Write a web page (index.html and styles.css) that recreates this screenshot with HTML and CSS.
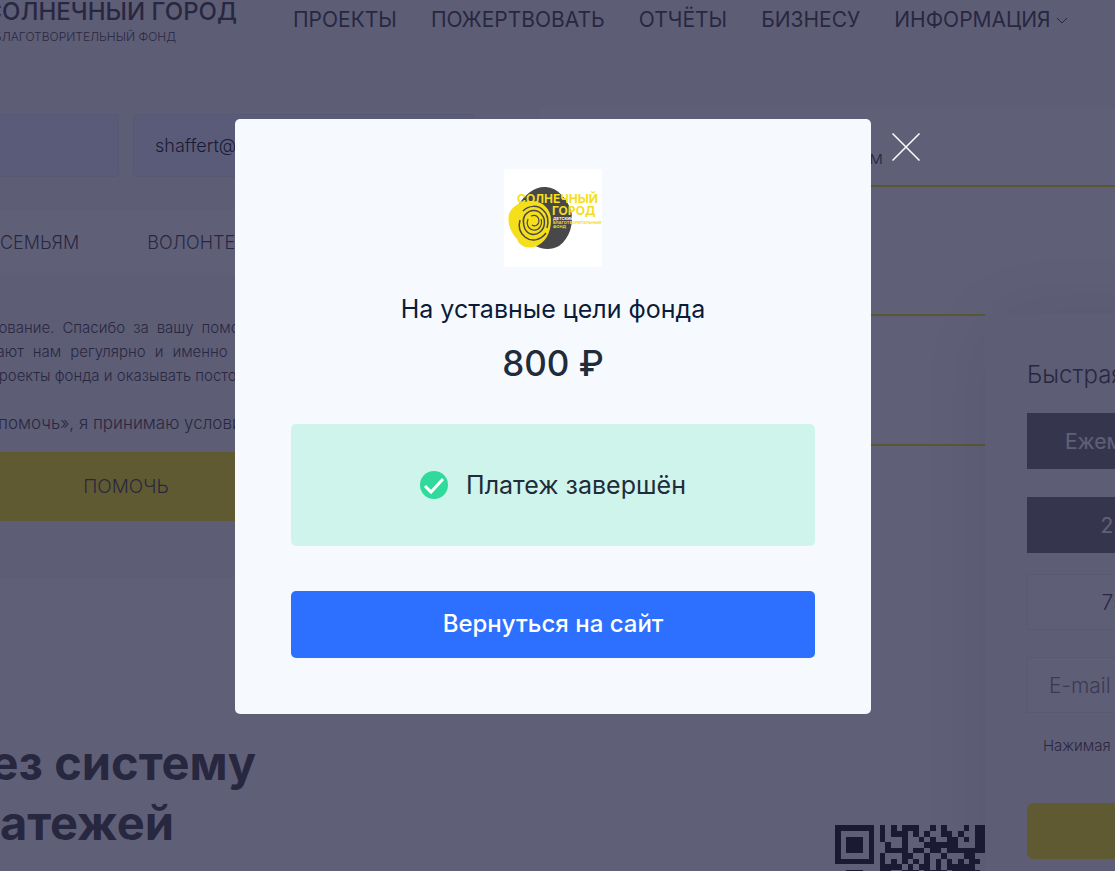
FILE: index.html
```
<!DOCTYPE html>
<html lang="ru">
<head>
<meta charset="utf-8">
<meta name="viewport" content="width=device-width, initial-scale=1">
<title>Солнечный город</title>
<link rel="stylesheet" href="styles.css">
</head>
<body>
<div class="page">
  <header class="header">
    <div class="brand">
      <span class="brand-name">СОЛНЕЧНЫЙ ГОРОД</span>
      <span class="brand-sub">БЛАГОТВОРИТЕЛЬНЫЙ ФОНД</span>
    </div>
    <nav class="nav">
      <a href="#">ПРОЕКТЫ</a>
      <a href="#">ПОЖЕРТВОВАТЬ</a>
      <a href="#">ОТЧЁТЫ</a>
      <a href="#">БИЗНЕСУ</a>
      <a href="#">ИНФОРМАЦИЯ <svg class="chevron" viewBox="0 0 12 8" aria-hidden="true"><path d="M1 1l5 5 5-5"/></svg></a>
    </nav>
  </header>
  <main class="content">
    <div class="donate">
      <div class="fields">
        <input class="field field-name" type="text" aria-label="Имя">
        <input class="field field-mail" type="text" aria-label="E-mail" value="shaffert@mail">
      </div>
      <div class="tabs">
        <a href="#">СЕМЬЯМ</a>
        <a href="#">ВОЛОНТЕРАМ</a>
      </div>
      <div class="terms">
        <p class="note">
          <span class="note-line">вование. Спасибо за вашу помощь</span>
          <span class="note-line">гают нам регулярно и именно эта</span>
          <span class="note-line note-last">проекты фонда и оказывать постоянную</span>
        </p>
        <p class="agree">помочь», я принимаю условия</p>
        <button class="help" type="button">ПОМОЧЬ</button>
      </div>
      <h2 class="headline">
        <span class="headline-first">через систему</span>
        <span class="headline-second">платежей</span>
      </h2>
    </div>
    <div class="ways">
      <ul class="ways-list">
        <li class="way way-first"><span class="way-label">Переводом</span></li>
        <li class="way"></li>
        <li class="way"></li>
      </ul>
      <svg class="qr" viewBox="0 0 27 9" role="img" aria-label="QR-код" shape-rendering="crispEdges">
        <path d="M0 .5h7M0 6.5h7M.5 0v7M6.5 0v7"/>
        <path d="M2 3.500h3M2 2.500h3M2 4.500h3"/>
        <path d="M8 .5h1m1 0h1m1 0h3m2 0h1m1 0h1m3 0h1m1 0h2M8 1.500h1m1 0h3m1 0h1m1 0h1m2 0h2m1 0h1m2 0h2M8 2.500h1m3 0h1m2 0h1m1 0h1m2 0h2m1 0h1m1 0h2M9 3.500h1m2 0h1m3 0h6m3 0h2M9 4.500h4m1 0h2m1 0h2m1 0h7M8 5.500h1m3 0h2m2 0h1m2 0h1m3 0h2M8 6.500h1m1 0h1m1 0h1m1 0h1m1 0h1m1 0h1m1 0h1m1 0h1m1 0h2m1 0h1M8 7.500h4m1 0h1m1 0h2m1 0h1m1 0h5M2 8.500h3m3 0h2m2 0h3m1 0h4m1 0h5"/>
      </svg>
    </div>
  </main>
  <aside class="quick">
    <h3 class="quick-title">Быстрая помощь</h3>
    <button class="pick pick-on pick-period" type="button">Ежемесячно</button>
    <button class="pick pick-on" type="button">250</button>
    <button class="pick" type="button">750</button>
    <input class="quick-mail" type="email" aria-label="E-mail" placeholder="E-mail">
    <p class="quick-note">Нажимая кнопку</p>
    <button class="quick-send" type="button" aria-label="Помочь"></button>
  </aside>
</div>
<div class="overlay">
  <section class="modal" role="dialog" aria-modal="true" aria-labelledby="purpose">
    <button class="close" type="button" aria-label="Закрыть">
      <svg viewBox="0 0 28 28" aria-hidden="true"><path d="M.5.5l27 27M27.5.5l-27 27"/></svg>
    </button>
    <svg class="logo" viewBox="0 0 98 98" role="img" aria-label="Солнечный город">
      <path fill="#fff" d="M0 0h98v98H0z"/>
      <path fill="#48484a" d="M15 35C22 24 32 17 42 18c12 1 20 11 25 23 3 13-1 28-12 36-11 6-24 3-35-9z"/>
      <path fill="#f5de1a" d="M5 45c3-8 12-13 22-13 12 0 20 8 20 19 0 13-6 24-17 27-9 2-15-2-17-8C7 64 3 54 5 45z"/>
      <g fill="none" stroke="#48484a">
        <path stroke-width="1.500" d="M19 42c6-6 15-6 20-1 5 4 6 12 4 18M42 64c-6 8-15 9-21 4-5-4-7-10-5-17"/>
        <path stroke-width="1.500" d="M21 46c5-6 13-6 17 0 4 5 3 13-2 17-5 4-12 3-15-3-2-5-3-9 0-14z"/>
        <path stroke-width="1.200" d="M37 50c2 6-2 12-8 11-5-1-7-6-5-11M27 47c5-2 8 1 8 5s-4 6-7 4"/>
      </g>
      <g fill="#f5de1a" font-family="Inter, sans-serif" font-weight="700">
        <text x="13" y="34" font-size="12">СОЛНЕЧНЫЙ</text>
        <text x="48" y="46" font-size="12">ГОРОД</text>
        <g font-size="4"><text x="49" y="51" fill="#fff">ДЕТСКИЙ</text><text x="49" y="55">БЛАГОТВОРИТЕЛЬНЫЙ</text><text x="49" y="59">ФОНД</text></g>
      </g>
    </svg>
    <h1 class="purpose" id="purpose">На уставные цели фонда</h1>
    <p class="amount">800 ₽</p>
    <div class="status">
      <svg class="status-icon" viewBox="0 0 28 28" aria-hidden="true"><circle cx="14" cy="14" r="14"/><path d="M5 15l6 6L23 8"/></svg>
      <span>Платеж завершён</span>
    </div>
    <button class="back" type="button">Вернуться на сайт</button>
  </section>
</div>
</body>
</html>
```
FILE: styles.css
```
* { box-sizing: border-box; }
body { margin: 0; font-family: Inter, "Noto Sans", sans-serif; font-weight: 300; color: #333; background: #fff; }
h1, h2, h3, p, ul { margin: 0; padding: 0; font-weight: inherit; }
a { color: inherit; text-decoration: none; }
button, input { font: inherit; color: inherit; border: 0; margin: 0; }

.page { position: relative; height: 100vh; overflow: hidden; display: flex; flex-direction: column; }

.header { flex: none; height: 108px; display: flex; background: #f6f6f6; white-space: nowrap; }
.brand { width: 237px; display: flex; flex-direction: column; overflow: hidden; }
.brand span { display: flex; justify-content: flex-end; }
.brand-name { font-size: 24px; line-height: 24px; font-weight: 500; }
.brand-sub { width: 176px; font-size: 12px; line-height: 26px; }
.nav { display: flex; gap: 34px; margin-left: 56px; font-size: 21px; line-height: 40px; font-weight: 400; }
.chevron { width: 12px; height: 8px; fill: none; stroke: #333; vertical-align: middle; }

.content { flex: 1; display: grid; grid-template-columns: 540px 1fr; }
.donate { min-width: 0; overflow: hidden; }
.fields { display: flex; gap: 14px; height: 102px; padding-top: 6px; background: #f6f6f6; }
.field { height: 63px; background: #e8f0fe; border: 1px solid #e2e6ee; border-radius: 4px; font-size: 18px; }
.field-name { width: 119px; border-left: 0; border-radius: 0 4px 4px 0; }
.field-mail { width: 342px; padding: 0 21px; color: #000; }
.tabs { display: flex; gap: 68px; height: 65px; font-size: 18px; line-height: 66px; }
.terms { height: 303px; padding-top: 41px; background: #f6f6f6; white-space: nowrap; }
.note { width: 270px; margin-left: -10px; font-size: 15px; line-height: 24px; }
.note-line { display: block; text-align-last: justify; }
.note-last { text-align-last: left; }
.agree { margin: 18px 0 12px -2px; font-size: 17px; line-height: 34px; }
.help { display: block; width: 252px; height: 69px; background: #ffec00; font-size: 19px; }
.headline { padding-top: 155px; font-size: 47px; line-height: 60px; font-weight: 700; white-space: nowrap; }
.headline span { display: flex; justify-content: flex-end; }
.headline-first { width: 256px; }
.headline-second { width: 174px; }

.ways-list { list-style: none; }
.way { height: 129px; border-bottom: 2px solid #e6e000; }
.way:last-child { height: 130px; }
.way-first { height: 79px; }
.way-label { display: block; width: 343px; text-align: right; font-size: 18px; line-height: 99px; }
.qr { display: block; width: 151px; height: 51px; margin: 379px 0 0 295px; fill: none; stroke: #000; }

.quick { position: absolute; top: 314px; right: -140px; width: 270px; height: 700px; padding: 43px 42px 0; background: #f8f8f8; box-shadow: 0 0 80px rgba(0, 0, 0, .12); display: flex; flex-direction: column; white-space: nowrap; }
.quick-title { font-size: 24px; line-height: 36px; margin-bottom: 20px; }
.pick { flex: none; height: 56px; margin-bottom: 21px; padding: 0; background: #fafafa; border: 1px solid #e8e8e8; font-size: 21px; }
.pick-on { background: #666; border-color: #666; color: #fff; font-weight: 400; }
.pick-period { margin-bottom: 28px; padding-left: 37px; text-align: left; }
.quick-mail { width: 100%; height: 56px; margin-top: 6px; padding: 0 21px; background: #fafafa; border: 1px solid #e8e8e8; font-size: 21px; }
.quick-mail::placeholder { color: #777; opacity: 1; }
.quick-note { margin: 20px 0 44px 16px; font-size: 15px; line-height: 26px; }
.quick-send { flex: none; height: 56px; background: #ffec00; border-radius: 6px; }

.overlay { position: fixed; inset: 0; display: flex; justify-content: center; align-items: flex-start; padding: 119px 9px 0 0; background: rgba(37, 35, 70, .73); }
.modal { position: relative; width: 636px; padding: 50px 56px 56px; display: flex; flex-direction: column; background: #f6faff; border-radius: 5px; font-weight: 500; text-align: center; color: #212b3a; }
.close { position: absolute; top: 14px; right: -49px; width: 28px; height: 28px; padding: 0; background: none; }
.close svg { display: block; fill: none; stroke: #fff; stroke-width: 1.5; }
.logo { width: 98px; height: 98px; align-self: center; }
.purpose { margin-top: 24px; font-size: 25px; line-height: 36px; color: #0b1b3a; font-weight: 400; }
.amount { margin: 12px 0 37px; font-size: 35px; line-height: 48px; }
.status { display: flex; justify-content: center; align-items: center; gap: 18px; height: 122px; background: #cff4eb; border-radius: 5px; font-size: 25px; line-height: 36px; font-weight: 400; }
.status-icon { width: 28px; height: 28px; fill: #2fda9c; }
.status-icon path { fill: none; stroke: #fff; stroke-width: 3; }
.back { height: 67px; margin-top: 45px; padding: 0 0 2px; background: #2d70ff; border-radius: 5px; color: #fff; font-size: 24px; }
```
